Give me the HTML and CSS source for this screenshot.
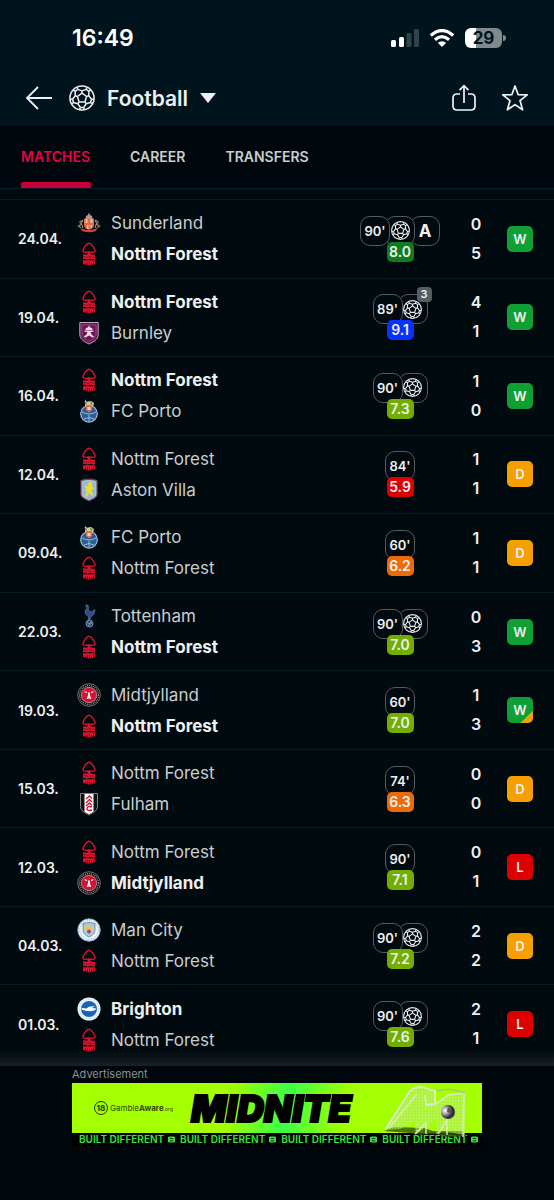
FILE: index.html
```html
<!DOCTYPE html>
<html lang="en">
<head>
    <meta charset="UTF-8">
    <meta name="viewport" content="width=device-width, initial-scale=1.0">
    <title>Football - Matches</title>
    <link rel="stylesheet" href="styles.css">
</head>
<body>
    <!-- Shared icons and club crests -->
    <svg class="sprite" aria-hidden="true">
        <defs>
            <g id="ball-part">
                <path d="M12 7.500L16.300 10.600M12 7.500V5.400M8.100 4L12 5.400L15.900 4M8.100 4L7.400 1.800M15.900 4L16.600 1.800M15.900 4L18.400 5.800"/>
            </g>
            <symbol id="ball" viewBox="0 0 24 24">
                <g fill="none" stroke="currentColor" stroke-width="1.4" stroke-linejoin="round">
                    <circle cx="12" cy="12" r="11.2"/>
                    <use href="#ball-part"/>
                    <use href="#ball-part" transform="rotate(72 12 12)"/>
                    <use href="#ball-part" transform="rotate(144 12 12)"/>
                    <use href="#ball-part" transform="rotate(216 12 12)"/>
                    <use href="#ball-part" transform="rotate(288 12 12)"/>
                </g>
            </symbol>
            <symbol id="forest" viewBox="0 0 24 24">
                <path d="M12 1.200C9.600 1.200 8.800 3.400 7.200 5.800C5.200 8.800 5.600 10.400 8 10.400C9.500 10.400 10.500 10 12 10S14.500 10.400 16 10.400C18.400 10.400 18.800 8.800 16.800 5.800C15.200 3.400 14.400 1.200 12 1.200Z" fill="none" stroke="#d8152f" stroke-width="1.400"/>
                <path d="M11 10h2l.8 3h-3.600z" fill="#d8152f"/>
                <path d="M6 12.600q1.500-.8 3 0t3 0t3 0t3 0v4.600q-1.500.8-3 0t-3 0t-3 0t-3 0z" fill="#d8152f"/>
                <path d="M6 15q1.500-.8 3 0t3 0t3 0t3 0" fill="none" stroke="#5c0b18" stroke-width=".5"/>
                <path d="M6 18.200h12v3.800l-1 .2v-2.600h-.5v3l-1.600.3v-2h-.5v2.200l-1.700.3v-3h-.5v3h-1.400l-.2-3h-.5v2.700l-1.600-.3v-2H8v1.800L6 22z" fill="#d8152f"/>
            </symbol>
            <symbol id="sunderland" viewBox="0 0 24 24">
                <path d="M12 1.500l1 2.500 2 1 .5 3h-7L9 5l2-1z" fill="#aa9da4"/>
                <path d="M7 7.500h10V14c0 3-2.500 4-5 5-2.500-1-5-2-5-5z" fill="#dc6a50"/>
                <path d="M8.500 8h2v4h-2zM13.500 8h2v4h-2zM10 14h1.500v4H10zM13.500 14H15v2.500h-1.500z" fill="#efc48f"/>
                <path d="M5.500 9L3 11l1 2.500L1.500 15l2.500 2M18.500 9l2.500 2-1 2.500 2.500 1.500-2.500 2" fill="none" stroke="#77785c" stroke-width="1.500"/>
                <path d="M6 9l-1.500 3.500L6 17M18 9l1.500 3.500L18 17" fill="none" stroke="#b39a87" stroke-width="1"/>
                <path d="M3.500 17q8.500 4 17 0l-1.500 3q-7 2.500-14 0z" fill="#cd4340"/>
            </symbol>
            <symbol id="burnley" viewBox="0 0 24 24">
                <path d="M2.800 1.500h18.400v12c0 5-5 7.500-9.200 9.500-4.200-2-9.200-4.500-9.200-9.500z" fill="#6c1458" stroke="#c6a4bd" stroke-width="1"/>
                <path d="M5 4h14v9c0 3.500-3.500 5.500-7 7.300C8.500 18.500 5 16.500 5 13z" fill="none" stroke="#a8709b" stroke-width=".6"/>
                <path d="M12 4.500l1.200 2 2 .5.300 2h-7l.3-2 2-.5zM7.500 9.500h9v1.300l-3 .2 1 2.500 2.500 2-1 1.300-4-2.300-4 2.300-1-1.300 2.500-2 1-2.500-3-.2z" fill="#e9dce5"/>
            </symbol>
            <symbol id="porto" viewBox="0 0 24 24">
                <circle cx="12" cy="14.800" r="8.300" fill="#2c5e95" stroke="#9ec3df" stroke-width="1.200"/>
                <path d="M5 13q7 4 14 0M7 20q5-3 10 0M12 16v6" fill="none" stroke="#a5c5dc" stroke-width=".9"/>
                <path d="M8 1l2 1.800L14 2l3 2-1 4-4 1-4-2z" fill="#d9c89a"/>
                <path d="M7 2l3 2-1 2zM13 3l3 1-2 2z" fill="#438b58"/>
                <path d="M9 6h6v5l-3 2.500L9 11z" fill="#e26b51"/>
                <path d="M10.500 8h3v3h-3z" fill="#f0d7bc"/>
            </symbol>
            <symbol id="villa" viewBox="0 0 24 24">
                <path d="M4 2.500q8-2.500 16 0v14c0 3.500-5 4.500-8 6.500-3-2-8-3-8-6.500z" fill="#93b9df" stroke="#75395c" stroke-width="1.300"/>
                <path d="M5.200 3.500q6.800-2 13.600 0v13c0 2.500-4 3.700-6.800 5.300-2.800-1.600-6.800-2.800-6.800-5.300z" fill="none" stroke="#c4d1a8" stroke-width=".6"/>
                <path d="M13 3.500l2.500 1.200-.5 2 .7 3L17 9v2l-2.500.8.300 2.700 1.700 2-1.500 1.500-2-2.500-1.500.3-1.500 3H8l1-3.300 1.500-2-2-.5-.7-2 2.500-.5L8 9.500V6l1.500 2 1.500 0 .5-3z" fill="#f3dc20"/>
            </symbol>
            <symbol id="tottenham" viewBox="0 0 24 24">
                <path d="M9 1l2 .3.500 2-.3 2.700 3 2L18 5.500l-1 4.500-3 3-1.500 3-1.200-.2.200-3L8.500 10 8 7l1.700-2.500V2.800L8.500 2z" fill="#2e4d8d" stroke="#7e94bf" stroke-width=".5"/>
                <circle cx="12.500" cy="19.500" r="3.500" fill="#27457f" stroke="#91a4c8" stroke-width=".8"/>
                <path d="M10 18.500q3 2 5-.5M11.500 22q0-2 3-2.500" fill="none" stroke="#b0bfdb" stroke-width=".7"/>
            </symbol>
            <symbol id="midtjylland" viewBox="0 0 24 24">
                <circle cx="12" cy="12" r="11.300" fill="#111" stroke="#8d8789" stroke-width=".8"/>
                <circle cx="12" cy="12" r="9.400" fill="none" stroke="#bcb4b4" stroke-width="1.200" stroke-dasharray=".8 1.200"/>
                <circle cx="12" cy="12" r="7.700" fill="#d51435" stroke="#ececec" stroke-width=".5"/>
                <path d="M11 9.500h2l-.2 2 1.400 4.500h-1.500l-.7-1.800-.7 1.800H9.800l1.400-4.500zM7.500 8l2.500 1v1l-2-.5zM16.500 8L14 9v1l2-.5z" fill="#fff"/>
            </symbol>
            <symbol id="fulham" viewBox="0 0 24 24">
                <path d="M3.500 1.500h17v13c0 4-4 6-8.500 8.500-4.500-2.500-8.500-4.500-8.500-8.500z" fill="#111" stroke="#8e8e8e" stroke-width=".9"/>
                <path d="M7.500 2h9v17.700L12 22.300l-4.500-2.600z" fill="#fff"/>
                <path d="M9 7l3.500-3L15 6.500M9 11l3.500-3.500L15 10M9 14l3.500-3L15 13.500M15 15q-5-1.500-5 1.500 0 3 5 1.500" fill="none" stroke="#d31536" stroke-width="1.400"/>
            </symbol>
            <symbol id="mancity" viewBox="0 0 24 24">
                <circle cx="12" cy="12" r="11.200" fill="#edf4f8" stroke="#7da9cf" stroke-width="1"/>
                <circle cx="12" cy="12" r="9.300" fill="none" stroke="#7b9cbd" stroke-width=".8" stroke-dasharray="1 1.300"/>
                <path d="M6 5.500q6-2 12 0v6q0 5-6 7.500-6-2.500-6-7.500z" fill="#a9cbe2" stroke="#53718f" stroke-width=".7"/>
                <path d="M7 11V8l2 1 3-1.500L15 9l2-1v3z" fill="#edc45b"/>
                <path d="M7 11.300h10q-1 4-5 6-4-2-5-6z" fill="#b6cad6"/>
                <circle cx="12" cy="13.600" r="2" fill="#a6465a"/>
            </symbol>
            <symbol id="brighton" viewBox="0 0 24 24">
                <circle cx="12" cy="12" r="11.500" fill="#f2f7fb"/>
                <circle cx="12" cy="12" r="9.700" fill="none" stroke="#8db5dd" stroke-width=".8" stroke-dasharray="1 1.200"/>
                <circle cx="12" cy="12" r="8" fill="#1765b4"/>
                <path d="M4.500 11l5 .5 2.500-1.800L18 9l-3 2 4.500.5-2 2-4 .8-4-.2-5-1.600z" fill="#fff"/>
            </symbol>
            <symbol id="mark" viewBox="0 0 8 7">
                <path d="M1 0h6l1 1v5L7 7H1L0 6V1zM2 2v1h4V2zM2 4.500v1h4v-1z" fill="currentColor" fill-rule="evenodd"/>
            </symbol>
        </defs>
    </svg>

    <div class="page">
        <header class="header">
            <div class="status-bar">
                <span class="time">16:49</span>
                <div class="status-icons">
                    <svg width="28" height="18" viewBox="0 0 28 18" aria-label="Signal">
                        <rect x="0" y="11" width="5" height="7" rx="1.500" fill="#fff"/>
                        <rect x="8" y="8" width="5" height="10" rx="1.500" fill="#fff"/>
                        <rect x="15.500" y="4" width="5" height="14" rx="1.500" fill="#33434c"/>
                        <rect x="23" y="0" width="5" height="18" rx="1.500" fill="#33434c"/>
                    </svg>
                    <svg width="26" height="18" viewBox="0 0 26 18" aria-label="Wi-Fi">
                        <g fill="none" stroke="#fff" stroke-width="3.300">
                            <path d="M1.800 6.500Q13-3.200 24.200 6.500"/>
                            <path d="M5.900 10.700Q13 4.600 20.100 10.700"/>
                        </g>
                        <path d="M8.800 13.800Q13 10.600 17.200 13.800L13 18z" fill="#fff"/>
                    </svg>
                    <div class="battery"><span>29</span></div>
                </div>
            </div>
            <nav class="nav">
                <button class="icon-button" type="button" aria-label="Back">
                    <svg width="28" height="28" viewBox="0 0 28 28"><path d="M13 3L2 14l11 11M2 14h25" fill="none" stroke="currentColor" stroke-width="1.800"/></svg>
                </button>
                <label class="sport">
                    <svg width="28" height="28" viewBox="-1 -1 26 26"><use href="#ball" width="24" height="24"/></svg>
                    <select class="sport-select" aria-label="Sport">
                        <option>Football</option>
                    </select>
                    <svg class="caret" width="16" height="10" viewBox="0 0 16 10"><path d="M0 0h16L8 10z" fill="currentColor"/></svg>
                </label>
                <button class="icon-button" type="button" aria-label="Share">
                    <svg width="24" height="28" viewBox="0 0 24 28"><path d="M8 10H5Q1 10 1 14v8q0 4 4 4h14q4 0 4-4v-8q0-4-4-4h-3M12 19V2M7.500 6.200L12 1.700l4.500 4.500" fill="none" stroke="currentColor" stroke-width="1.700"/></svg>
                </button>
                <button class="icon-button" type="button" aria-label="Add to favourites">
                    <svg width="28" height="28" viewBox="0 0 28 28"><path d="M14 2l3.200 8.700 9 .2-7.200 5.700 2.600 9.200-7.600-5.200-7.600 5.200L9 16.600l-7.200-5.700 9-.2z" fill="none" stroke="currentColor" stroke-width="1.700" stroke-linejoin="round"/></svg>
                </button>
            </nav>
        </header>

        <div class="tabs">
            <a href="#matches" class="tab active">MATCHES</a>
            <a href="#career" class="tab">CAREER</a>
            <a href="#transfers" class="tab">TRANSFERS</a>
        </div>

        <main class="matches" id="matches">
            <div class="match">
                <span class="date">24.04.</span>
                <div class="teams">
                    <div class="team"><svg class="crest"><use href="#sunderland"/></svg>Sunderland</div>
                    <div class="team winner"><svg class="crest"><use href="#forest"/></svg>Nottm Forest</div>
                </div>
                <div class="stats">
                    <div class="incidents">
                        <span class="box">90'</span>
                        <span class="box"><svg class="ball"><use href="#ball"/></svg></span>
                        <span class="box assist">A</span>
                    </div>
                    <span class="rating great">8.0</span>
                </div>
                <div class="score"><span>0</span><span>5</span></div>
                <span class="result win">W</span>
            </div>
            <div class="match">
                <span class="date">19.04.</span>
                <div class="teams">
                    <div class="team winner"><svg class="crest"><use href="#forest"/></svg>Nottm Forest</div>
                    <div class="team"><svg class="crest"><use href="#burnley"/></svg>Burnley</div>
                </div>
                <div class="stats">
                    <div class="incidents">
                        <span class="box">89'</span>
                        <span class="box"><svg class="ball"><use href="#ball"/></svg><span class="count">3</span></span>
                    </div>
                    <span class="rating top">9.1</span>
                </div>
                <div class="score"><span>4</span><span>1</span></div>
                <span class="result win">W</span>
            </div>
            <div class="match">
                <span class="date">16.04.</span>
                <div class="teams">
                    <div class="team winner"><svg class="crest"><use href="#forest"/></svg>Nottm Forest</div>
                    <div class="team"><svg class="crest"><use href="#porto"/></svg>FC Porto</div>
                </div>
                <div class="stats">
                    <div class="incidents">
                        <span class="box">90'</span>
                        <span class="box"><svg class="ball"><use href="#ball"/></svg></span>
                    </div>
                    <span class="rating good">7.3</span>
                </div>
                <div class="score"><span>1</span><span>0</span></div>
                <span class="result win">W</span>
            </div>
            <div class="match">
                <span class="date">12.04.</span>
                <div class="teams">
                    <div class="team"><svg class="crest"><use href="#forest"/></svg>Nottm Forest</div>
                    <div class="team"><svg class="crest"><use href="#villa"/></svg>Aston Villa</div>
                </div>
                <div class="stats">
                    <div class="incidents">
                        <span class="box">84'</span>
                    </div>
                    <span class="rating poor">5.9</span>
                </div>
                <div class="score"><span>1</span><span>1</span></div>
                <span class="result draw">D</span>
            </div>
            <div class="match">
                <span class="date">09.04.</span>
                <div class="teams">
                    <div class="team"><svg class="crest"><use href="#porto"/></svg>FC Porto</div>
                    <div class="team"><svg class="crest"><use href="#forest"/></svg>Nottm Forest</div>
                </div>
                <div class="stats">
                    <div class="incidents">
                        <span class="box">60'</span>
                    </div>
                    <span class="rating average">6.2</span>
                </div>
                <div class="score"><span>1</span><span>1</span></div>
                <span class="result draw">D</span>
            </div>
            <div class="match">
                <span class="date">22.03.</span>
                <div class="teams">
                    <div class="team"><svg class="crest"><use href="#tottenham"/></svg>Tottenham</div>
                    <div class="team winner"><svg class="crest"><use href="#forest"/></svg>Nottm Forest</div>
                </div>
                <div class="stats">
                    <div class="incidents">
                        <span class="box">90'</span>
                        <span class="box"><svg class="ball"><use href="#ball"/></svg></span>
                    </div>
                    <span class="rating good">7.0</span>
                </div>
                <div class="score"><span>0</span><span>3</span></div>
                <span class="result win">W</span>
            </div>
            <div class="match">
                <span class="date">19.03.</span>
                <div class="teams">
                    <div class="team"><svg class="crest"><use href="#midtjylland"/></svg>Midtjylland</div>
                    <div class="team winner"><svg class="crest"><use href="#forest"/></svg>Nottm Forest</div>
                </div>
                <div class="stats">
                    <div class="incidents">
                        <span class="box">60'</span>
                    </div>
                    <span class="rating good">7.0</span>
                </div>
                <div class="score"><span>1</span><span>3</span></div>
                <span class="result win after-draw">W</span>
            </div>
            <div class="match">
                <span class="date">15.03.</span>
                <div class="teams">
                    <div class="team"><svg class="crest"><use href="#forest"/></svg>Nottm Forest</div>
                    <div class="team"><svg class="crest"><use href="#fulham"/></svg>Fulham</div>
                </div>
                <div class="stats">
                    <div class="incidents">
                        <span class="box">74'</span>
                    </div>
                    <span class="rating average">6.3</span>
                </div>
                <div class="score"><span>0</span><span>0</span></div>
                <span class="result draw">D</span>
            </div>
            <div class="match">
                <span class="date">12.03.</span>
                <div class="teams">
                    <div class="team"><svg class="crest"><use href="#forest"/></svg>Nottm Forest</div>
                    <div class="team winner"><svg class="crest"><use href="#midtjylland"/></svg>Midtjylland</div>
                </div>
                <div class="stats">
                    <div class="incidents">
                        <span class="box">90'</span>
                    </div>
                    <span class="rating good">7.1</span>
                </div>
                <div class="score"><span>0</span><span>1</span></div>
                <span class="result loss">L</span>
            </div>
            <div class="match">
                <span class="date">04.03.</span>
                <div class="teams">
                    <div class="team"><svg class="crest"><use href="#mancity"/></svg>Man City</div>
                    <div class="team"><svg class="crest"><use href="#forest"/></svg>Nottm Forest</div>
                </div>
                <div class="stats">
                    <div class="incidents">
                        <span class="box">90'</span>
                        <span class="box"><svg class="ball"><use href="#ball"/></svg></span>
                    </div>
                    <span class="rating good">7.2</span>
                </div>
                <div class="score"><span>2</span><span>2</span></div>
                <span class="result draw">D</span>
            </div>
            <div class="match">
                <span class="date">01.03.</span>
                <div class="teams">
                    <div class="team winner"><svg class="crest"><use href="#brighton"/></svg>Brighton</div>
                    <div class="team"><svg class="crest"><use href="#forest"/></svg>Nottm Forest</div>
                </div>
                <div class="stats">
                    <div class="incidents">
                        <span class="box">90'</span>
                        <span class="box"><svg class="ball"><use href="#ball"/></svg></span>
                    </div>
                    <span class="rating good">7.6</span>
                </div>
                <div class="score"><span>2</span><span>1</span></div>
                <span class="result loss">L</span>
            </div>
        </main>

        <footer class="advert">
            <div class="advert-inner">
                <p class="advert-label">Advertisement</p>
                <a href="#" class="banner">
                    <span class="banner-main">
                        <span class="aware"><span class="age">18</span><span>Gamble<b>Aware</b><small>.org</small></span></span>
                        <span class="brand">MIDNITE</span>
                    </span>
                    <span class="strip">
                        <span>BUILT DIFFERENT <svg class="mark"><use href="#mark"/></svg></span>
                        <span>BUILT DIFFERENT <svg class="mark"><use href="#mark"/></svg></span>
                        <span>BUILT DIFFERENT <svg class="mark"><use href="#mark"/></svg></span>
                        <span>BUILT DIFFERENT <svg class="mark"><use href="#mark"/></svg></span>
                    </span>
                    <svg class="goal" width="84" height="54" viewBox="0 0 84 54" aria-hidden="true">
                        <defs>
                            <pattern id="net" width="3" height="3" patternUnits="userSpaceOnUse"><path d="M0 0h3M0 0v3" stroke="#e8ffd0" stroke-width=".6" opacity=".5"/></pattern>
                            <radialGradient id="shine" cx=".3" cy=".4"><stop offset="0" stop-color="#fff"/><stop offset=".5" stop-color="#a9a4b0"/><stop offset="1" stop-color="#35313b"/></radialGradient>
                        </defs>
                        <path d="M1 46l10-4 30 1 9 3 30 0 3 5-18 1-12-3-16 1-10-2z" fill="#33520b" opacity=".8"/>
                        <path d="M1 45L27 4l12-3 13 4 1 14 12-9 17-2v42l-22-4-7 3 1-15-21 15-2-12-14 7z" fill="#b4e66a" opacity=".5"/>
                        <path d="M1 45L27 4l12-3 13 4 1 14 12-9 17-2v42l-22-4-7 3 1-15-21 15-2-12-14 7z" fill="url(#net)"/>
                        <g fill="none" stroke="#dcebd0" stroke-linejoin="round" stroke-width="1.800">
                            <path d="M2 45L27 6q3-4 12-4l13 4v13l-9 1-1-10"/>
                            <path d="M6 43L34 9M32 49l11-11v11M55 49l9-14v15M53 19l12-9 16-2-1 44" opacity=".8"/>
                            <path d="M54 6l12-2 16 4" stroke="#a6b896" stroke-width="1"/>
                        </g>
                        <circle cx="65" cy="27" r="7" fill="url(#shine)"/>
                        <path d="M65 22l3 3-1 3-3-1zM61 31l4 0-2 2z" fill="#59535f"/>
                    </svg>
                </a>
            </div>
        </footer>
    </div>
</body>
</html>
```
FILE: styles.css
```css
* {
    box-sizing: border-box;
}
body {
    margin: 0;
    background: #010a0f;
    color: #eeeff0;
    font-family: Inter, "Liberation Sans", sans-serif;
}
.sprite {
    display: block;
    width: 0;
    height: 0;
}
.page {
    display: flex;
    flex-direction: column;
    min-height: 100vh;
}

/* Header */
.header {
    background: #00141e;
}
.status-bar {
    display: flex;
    justify-content: space-between;
    align-items: center;
    height: 70px;
    padding: 5px 48px 0 72px;
}
.time {
    font-size: 23px;
    font-weight: 600;
    color: #fff;
}
.status-icons {
    display: flex;
    align-items: center;
    gap: 10px;
}
.battery {
    position: relative;
    width: 37px;
    height: 20px;
    margin-right: 4px;
    border-radius: 6px;
    background: linear-gradient(90deg, #fff 29%, #7f898e 29%);
    color: #00141e;
    font-size: 17px;
    font-weight: 700;
    line-height: 20px;
    text-align: center;
}
.battery::after {
    content: "";
    position: absolute;
    top: 7px;
    right: -4px;
    width: 3px;
    height: 6px;
    border-radius: 0 3px 3px 0;
    background: #7f898e;
}
.nav {
    display: flex;
    align-items: center;
    height: 56px;
    padding: 0 25px;
}
.icon-button {
    display: flex;
    padding: 0;
    border: none;
    background: none;
    color: #eef3f5;
    cursor: pointer;
}
.icon-button + .icon-button {
    margin-left: 25px;
}
.sport {
    display: flex;
    align-items: center;
    gap: 11px;
    margin-left: 15px;
    margin-right: auto;
}
.sport-select {
    appearance: none;
    padding: 0;
    border: none;
    background: none;
    color: #eeeff0;
    font-family: inherit;
    font-size: 21px;
    font-weight: 600;
}
.sport-select option {
    color: #111;
}
.caret {
    pointer-events: none;
}

/* Tabs */
.tabs {
    display: flex;
    gap: 40px;
    height: 63px;
    padding: 0 21px;
    border-bottom: 1px solid #07202b;
    background: #00070c;
}
.tab {
    display: flex;
    align-items: center;
    border-bottom: 1px solid transparent;
    color: #c8cdd0;
    font-size: 14px;
    font-weight: 600;
    text-decoration: none;
}
.tab.active {
    position: relative;
    color: #e00548;
}
.tab.active::after {
    content: "";
    position: absolute;
    right: -1px;
    bottom: -1px;
    left: 0;
    height: 6px;
    border-radius: 2px 2px 0 0;
    background: #c80037;
}

/* Match list */
.matches {
    display: flex;
    flex: 1;
    flex-direction: column;
    padding-top: 10px;
}
.match {
    display: grid;
    grid-template-columns: 59px 1fr 80px 49px 44px;
    align-items: center;
    flex: 1;
    padding: 2px 21px 2px 18px;
    border-top: 1px solid #061b26;
}
.date {
    font-size: 14px;
    font-weight: 600;
}
.team {
    display: flex;
    align-items: center;
    gap: 10px;
    height: 31px;
    color: #c8cdd0;
    font-size: 17px;
}
.team.winner {
    color: #eeeff0;
    font-weight: 700;
}
.crest {
    width: 24px;
    height: 24px;
}
.stats {
    display: flex;
    flex-direction: column;
    align-items: center;
}
.incidents {
    display: flex;
}
.box {
    position: relative;
    z-index: 3;
    display: flex;
    justify-content: center;
    align-items: center;
    width: 30px;
    height: 30px;
    border: 1px solid #555b5f;
    border-radius: 10px;
    background: #010a0f;
    font-size: 13px;
    font-weight: 600;
}
.box + .box {
    z-index: 2;
    margin-left: -5px;
}
.box + .box + .box {
    z-index: 1;
}
.assist {
    font-size: 17px;
    font-weight: 700;
}
.ball {
    width: 19px;
    height: 19px;
}
.count {
    position: absolute;
    top: -8px;
    right: -5px;
    width: 15px;
    height: 15px;
    border-radius: 4px;
    background: #555e62;
    font-size: 11px;
    line-height: 15px;
    text-align: center;
}
.rating {
    z-index: 4;
    width: 27px;
    margin-top: -4px;
    border-radius: 5px;
    color: #eeeff0;
    font-size: 14px;
    font-weight: 600;
    line-height: 20px;
    text-align: center;
}
.top {
    background: #0a32ff;
}
.great {
    background: #0f7d1f;
}
.good {
    background: #72ae00;
}
.average {
    background: #ed6b07;
}
.poor {
    background: #dc0000;
}
.score {
    display: flex;
    flex-direction: column;
    margin-left: 23px;
    font-size: 16px;
    font-weight: 600;
    line-height: 29px;
    text-align: center;
}
.result {
    margin-left: 18px;
    border-radius: 5px;
    color: #eeeff0;
    font-size: 13px;
    font-weight: 600;
    line-height: 26px;
    text-align: center;
}
.win {
    background: #109f35;
}
.draw {
    background: #f5a000;
}
.loss {
    background: #dc0000;
}
.after-draw {
    background: linear-gradient(135deg, #109f35 76%, #f5a000 76%);
}

/* Advert */
.advert {
    position: relative;
    min-height: 137px;
    border-top: 3px solid #17242b;
    background: #00070c;
}
.advert::before {
    content: "";
    position: absolute;
    right: 0;
    bottom: 100%;
    left: 0;
    height: 16px;
    background: linear-gradient(transparent, #162026);
    pointer-events: none;
}
.advert-inner {
    max-width: 410px;
    margin: 0 auto;
}
.advert-label {
    margin: 0;
    color: #8c9194;
    font-size: 11px;
    line-height: 17px;
}
.banner {
    position: relative;
    display: block;
    color: #000;
    text-decoration: none;
}
.banner-main {
    display: flex;
    align-items: center;
    height: 50px;
    padding-left: 22px;
    background: linear-gradient(100deg, #a4ff00 38%, #3dff45 52%, #a4ff00 67%);
}
.aware {
    display: flex;
    align-items: center;
    gap: 2px;
    width: 97px;
    color: #2b4d00;
    font-size: 8px;
}
.aware small {
    font-size: 5px;
}
.age {
    width: 14px;
    height: 14px;
    border: 1px solid #1c3300;
    border-radius: 50%;
    font-size: 8px;
    font-weight: 800;
    line-height: 12px;
    text-align: center;
}
.brand {
    font-size: 37px;
    font-style: italic;
    font-weight: 900;
    -webkit-text-stroke: 2px #000;
}
.strip {
    display: flex;
    justify-content: space-between;
    padding: 0 4px 0 7px;
    background: #000;
    color: #35e63f;
    font-size: 10px;
    font-weight: 600;
    line-height: 13px;
    white-space: nowrap;
    overflow: hidden;
}
.mark {
    width: 7px;
    height: 7px;
    margin-left: 1px;
}
.goal {
    position: absolute;
    top: 2px;
    right: 15px;
}
```
